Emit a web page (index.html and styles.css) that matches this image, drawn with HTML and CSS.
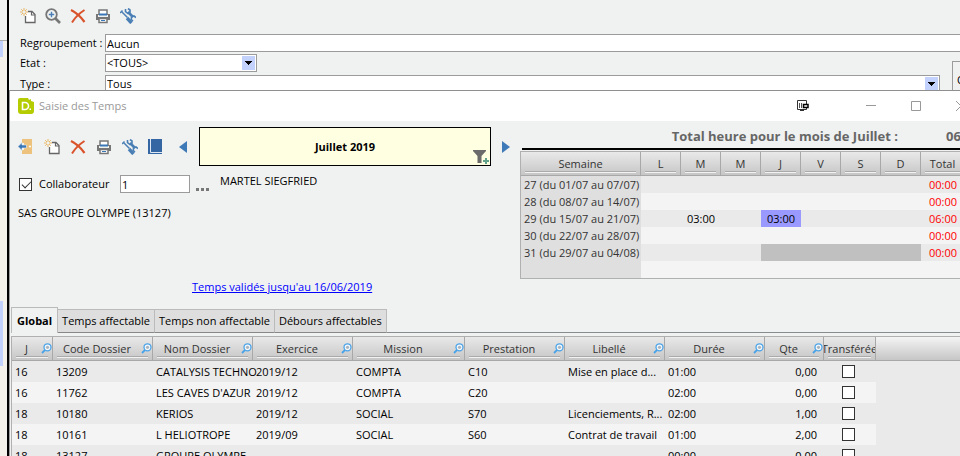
FILE: index.html
```
<!DOCTYPE html>
<html lang="fr">
<head>
    <meta charset="UTF-8">
    <meta name="viewport" content="width=device-width, initial-scale=1.0">
    <title>Saisie des Temps</title>
    <link rel="stylesheet" href="styles.css">
</head>
<body>
    <!-- Icônes -->
    <svg class="sprite" aria-hidden="true">
        <symbol id="i-new" viewBox="0 0 16 16">
            <path d="M8 3.500h4l3 3v8H5.500V8" fill="#fff" stroke="#666" stroke-width="1.300"/>
            <path d="M11.500 3.500v3.500h3.500" fill="none" stroke="#666" stroke-width="1.200"/>
            <path d="M4 0v8M0 4h8M1.200 1.200l5.600 5.600M6.800 1.200L1.200 6.800" stroke="#eab765" stroke-width="1"/>
            <circle cx="4" cy="4" r="1.300" fill="#f0f2f1"/>
        </symbol>
        <symbol id="i-zoom" viewBox="0 0 16 16">
            <path d="M10.500 10.500l4.500 4.500" stroke="#777" stroke-width="2.600"/>
            <circle cx="6.500" cy="6.500" r="5.300" fill="#f0f2f1" stroke="#777" stroke-width="1.800"/>
            <path d="M6.500 3.800v5.400M3.800 6.500h5.400" stroke="#4a7fb5" stroke-width="1.400"/>
        </symbol>
        <symbol id="i-delete" viewBox="0 0 16 16">
            <path d="M1 2C5 4 11 9 14.500 14" fill="none" stroke="#d9532c" stroke-width="2.200"/>
            <path d="M14.500 2C9 5.500 5 9.500 2 14.500" fill="none" stroke="#d9532c" stroke-width="2"/>
        </symbol>
        <symbol id="i-print" viewBox="0 0 16 16">
            <path d="M4 6V2h8v4" fill="#fff" stroke="#777" stroke-width="1.500"/>
            <path d="M1 6h14v6H1z" fill="#777"/>
            <path d="M3 7h10v2H3z" fill="#f0f2f1"/>
            <path d="M4 5.500h8v2H4z" fill="#3a77b7"/>
            <path d="M4 10.500h8v4H4z" fill="#fff" stroke="#777" stroke-width="1.500"/>
            <path d="M6 12.500h4" stroke="#3a77b7"/>
        </symbol>
        <symbol id="i-tools" viewBox="0 0 16 16">
            <path d="M1.500 3.500l6 6" stroke="#4a7fb5" stroke-width="1.500"/>
            <path d="M0 5l2.500-2.500" stroke="#4a7fb5" stroke-width="1.500"/>
            <path d="M7 10l4.500 5" stroke="#4a7fb5" stroke-width="3.400"/>
            <path d="M8 4l5 5" stroke="#4a7fb5" stroke-width="2.600"/>
            <path d="M5.500 1v2.500L8 5.500l2-1.500V2L8 .500M16 9.500l-2-1.500-2.500 1-.2 2.500 1.700 1.500" fill="none" stroke="#4a7fb5" stroke-width="1.600"/>
        </symbol>
        <symbol id="i-exit" viewBox="0 0 16 16">
            <path d="M4 0h10v15H4v-4h4V4H4z" fill="#edc27c"/>
            <path d="M6 2h8v11H6z" fill="#edc27c"/>
            <path d="M0 7.500l4-4V6h4.500v3H4v2.500z" fill="#3a77b7" stroke="#f0f2f1" stroke-width=".6"/>
            <circle cx="12" cy="7.500" r="1" fill="#fff"/>
        </symbol>
        <symbol id="i-book" viewBox="0 0 16 16">
            <path d="M0 0h14v15H0z" fill="#3366a3"/>
            <path d="M2.500 0v13.500H14" fill="none" stroke="#dfe8f2" stroke-width="1"/>
        </symbol>
        <symbol id="i-search" viewBox="0 0 11 11">
            <path d="M4.500 6.500L1 10" stroke="#4aa3e8" stroke-width="1.800"/>
            <circle cx="6.500" cy="4.300" r="3.500" fill="#f5f9fd" stroke="#4aa3e8" stroke-width="1.300"/>
            <circle cx="6.500" cy="4.300" r="1.600" fill="#aab4bc"/>
        </symbol>
        <symbol id="i-funnel" viewBox="0 0 17 16">
            <path d="M0 1h13v1L8.500 7v7h-4V7L0 2z" fill="#6b6b6b"/>
            <path d="M13 9v6M10 12h6" stroke="#62a28d" stroke-width="2"/>
        </symbol>
    </svg>

    <!-- Bord de la fenêtre voisine -->
    <div class="side">
        <div class="side-top"></div>
        <div class="side-item"></div>
        <div class="side-space"></div>
        <div class="side-item side-item-tall"></div>
    </div>

    <main class="main">
        <!-- Fenêtre principale -->
        <section class="filters">
            <div class="toolbar">
                <button class="tool" aria-label="Nouveau"><svg><use href="#i-new"/></svg></button>
                <button class="tool" aria-label="Rechercher"><svg><use href="#i-zoom"/></svg></button>
                <button class="tool" aria-label="Supprimer"><svg><use href="#i-delete"/></svg></button>
                <button class="tool" aria-label="Imprimer"><svg><use href="#i-print"/></svg></button>
                <button class="tool" aria-label="Outils"><svg><use href="#i-tools"/></svg></button>
            </div>
            <div class="filter-row">
                <label for="regroupement">Regroupement :</label>
                <input class="field field-wide" type="text" id="regroupement" value="Aucun">
            </div>
            <div class="filter-lower">
                <div class="filter-fields">
                    <div class="filter-row">
                        <label for="etat">Etat :</label>
                        <select class="field field-etat" id="etat"><option>&lt;TOUS&gt;</option></select>
                    </div>
                    <div class="filter-row">
                        <label for="type">Type :</label>
                        <select class="field field-wide" id="type"><option>Tous</option></select>
                    </div>
                </div>
                <div class="group-box">O</div>
            </div>
        </section>

        <!-- Fenêtre de saisie -->
        <section class="dialog">
            <header class="titlebar">
                <svg class="logo" viewBox="0 0 16 16" aria-hidden="true">
                    <path d="M2 0h8l1 2 2-1v2l3 1v9a3 3 0 0 1-3 3H3a3 3 0 0 1-3-3V2a2 2 0 0 1 2-2z" fill="#b5cc00"/>
                    <path d="M4.500 4.500h2.500a3.500 3.500 0 0 1 0 7H4.500z" fill="none" stroke="#fff" stroke-width="1.600"/>
                    <path d="M11.500 10.500H13V12h-1.500z" fill="#fff"/>
                </svg>
                <h1>Saisie des Temps</h1>
                <svg class="screen-icon" viewBox="0 0 12 12" aria-hidden="true">
                    <path d="M.5.500h9v9h-9z" fill="#fff" stroke="#333"/>
                    <path d="M3 10.500h4" stroke="#333"/>
                    <path d="M2.500 3v5M4.500 3v5" stroke="#555"/>
                    <path d="M6.500 4.500h4.500v3h-4.500z" fill="#fff" stroke="#000" stroke-width="1.500"/>
                </svg>
                <button class="win-button" aria-label="Réduire"><svg viewBox="0 0 10 10"><path d="M0 4.500h10"/></svg></button>
                <button class="win-button" aria-label="Agrandir"><svg viewBox="0 0 10 10"><path d="M.5.500h9v9h-9z"/></svg></button>
                <button class="win-button" aria-label="Fermer"><svg viewBox="0 0 10 10"><path d="M0 0l10 10M10 0L0 10"/></svg></button>
            </header>

            <div class="top">
                <div class="entry">
                    <div class="month-row">
                        <div class="toolbar">
                            <button class="tool" aria-label="Quitter"><svg><use href="#i-exit"/></svg></button>
                            <button class="tool" aria-label="Nouveau"><svg><use href="#i-new"/></svg></button>
                            <button class="tool" aria-label="Supprimer"><svg><use href="#i-delete"/></svg></button>
                            <button class="tool" aria-label="Imprimer"><svg><use href="#i-print"/></svg></button>
                            <button class="tool" aria-label="Outils"><svg><use href="#i-tools"/></svg></button>
                            <button class="tool" aria-label="Journal"><svg><use href="#i-book"/></svg></button>
                        </div>
                        <button class="arrow" aria-label="Mois précédent"><svg viewBox="0 0 8 12"><path d="M8 0v12L0 6z"/></svg></button>
                        <div class="month">
                            Juillet 2019
                            <svg class="funnel"><use href="#i-funnel"/></svg>
                        </div>
                        <button class="arrow" aria-label="Mois suivant"><svg viewBox="0 0 8 12"><path d="M0 0v12l8-6z"/></svg></button>
                    </div>
                    <div class="person-row">
                        <input class="check" type="checkbox" id="collab-actif" checked>
                        <label for="collab-actif">Collaborateur</label>
                        <input class="field field-code" type="text" value="1" aria-label="Code collaborateur">
                        <button class="dots" aria-label="Choisir"><i></i><i></i><i></i></button>
                        <span class="person">MARTEL SIEGFRIED</span>
                    </div>
                    <p class="company">SAS GROUPE OLYMPE (13127)</p>
                    <a class="validated" href="#">Temps validés jusqu'au 16/06/2019</a>
                </div>

                <div class="weeks">
                    <div class="weeks-title"><span>Total heure pour le mois de Juillet :</span><span>06:00</span></div>
                    <table class="week-table">
                        <thead>
                            <tr><th class="w-week">Semaine</th><th>L</th><th>M</th><th>M</th><th>J</th><th>V</th><th>S</th><th>D</th><th class="w-total">Total</th><th class="w-rest"></th></tr>
                        </thead>
                        <tbody>
                            <tr><th>27 (du 01/07 au 07/07)</th><td></td><td></td><td></td><td></td><td></td><td></td><td></td><td class="total">00:00</td><td></td></tr>
                            <tr><th>28 (du 08/07 au 14/07)</th><td></td><td></td><td></td><td></td><td></td><td></td><td></td><td class="total">00:00</td><td></td></tr>
                            <tr><th>29 (du 15/07 au 21/07)</th><td></td><td>03:00</td><td></td><td class="current">03:00</td><td></td><td></td><td></td><td class="total">06:00</td><td></td></tr>
                            <tr><th>30 (du 22/07 au 28/07)</th><td></td><td></td><td></td><td></td><td></td><td></td><td></td><td class="total">00:00</td><td></td></tr>
                            <tr><th>31 (du 29/07 au 04/08)</th><td></td><td></td><td></td><td class="off"></td><td class="off"></td><td class="off"></td><td class="off"></td><td class="total">00:00</td><td></td></tr>
                            <tr><th></th><td></td><td></td><td></td><td></td><td></td><td></td><td></td><td></td><td></td></tr>
                        </tbody>
                    </table>
                </div>
            </div>

            <!-- Onglets -->
            <nav class="tabs">
                <button class="tab tab-active">Global</button>
                <button class="tab">Temps affectable</button>
                <button class="tab">Temps non affectable</button>
                <button class="tab">Débours affectables</button>
                <span class="tabs-line"></span>
            </nav>

            <!-- Lignes de temps -->
            <table class="grid">
                <thead>
                    <tr>
                        <th class="c-day"><div><span>J</span><svg><use href="#i-search"/></svg></div></th>
                        <th class="c-std"><div><span>Code Dossier</span><svg><use href="#i-search"/></svg></div></th>
                        <th class="c-std"><div><span>Nom Dossier</span><svg><use href="#i-search"/></svg></div></th>
                        <th class="c-std"><div><span>Exercice</span><svg><use href="#i-search"/></svg></div></th>
                        <th class="c-mission"><div><span>Mission</span><svg><use href="#i-search"/></svg></div></th>
                        <th class="c-std"><div><span>Prestation</span><svg><use href="#i-search"/></svg></div></th>
                        <th class="c-std"><div><span>Libellé</span><svg><use href="#i-search"/></svg></div></th>
                        <th class="c-std"><div><span>Durée</span><svg><use href="#i-search"/></svg></div></th>
                        <th class="c-qty"><div><span>Qte</span><svg><use href="#i-search"/></svg></div></th>
                        <th class="c-sent"><div><span>Transférée</span></div></th>
                        <th class="rest"></th>
                    </tr>
                </thead>
                <tbody>
                    <tr><td>16</td><td>13209</td><td>CATALYSIS TECHNO</td><td>2019/12</td><td>COMPTA</td><td>C10</td><td>Mise en place d...</td><td>01:00</td><td class="num">0,00</td><td class="mid"><input class="check" type="checkbox" aria-label="Transférée"></td><td class="rest"></td></tr>
                    <tr><td>16</td><td>11762</td><td>LES CAVES D'AZUR</td><td>2019/12</td><td>COMPTA</td><td>C20</td><td></td><td>02:00</td><td class="num">0,00</td><td class="mid"><input class="check" type="checkbox" aria-label="Transférée"></td><td class="rest"></td></tr>
                    <tr><td>18</td><td>10180</td><td>KERIOS</td><td>2019/12</td><td>SOCIAL</td><td>S70</td><td>Licenciements, R...</td><td>02:00</td><td class="num">1,00</td><td class="mid"><input class="check" type="checkbox" aria-label="Transférée"></td><td class="rest"></td></tr>
                    <tr><td>18</td><td>10161</td><td>L HELIOTROPE</td><td>2019/09</td><td>SOCIAL</td><td>S60</td><td>Contrat de travail</td><td>01:00</td><td class="num">2,00</td><td class="mid"><input class="check" type="checkbox" aria-label="Transférée"></td><td class="rest"></td></tr>
                    <tr><td>18</td><td>13127</td><td>GROUPE OLYMPE</td><td></td><td></td><td></td><td></td><td>00:00</td><td class="num">0,00</td><td class="mid"><input class="check" type="checkbox" aria-label="Transférée"></td><td class="rest"></td></tr>
                </tbody>
            </table>
        </section>
    </main>
</body>
</html>
```
FILE: styles.css
```
* {
    margin: 0;
    padding: 0;
    box-sizing: border-box;
}

body {
    display: flex;
    height: 100vh;
    overflow: hidden;
    background-color: #f0f2f1;
    color: #000;
    font-family: "Open Sans", "Noto Sans", sans-serif;
    font-size: 11px;
    line-height: 16px;
}

input, select, button {
    font: inherit;
    color: inherit;
}

button {
    background: none;
    border: none;
}

svg {
    display: block;
}

.sprite {
    position: absolute;
    width: 0;
    height: 0;
}

/* Bord gauche */
.side {
    flex: none;
    width: 9px;
    background-color: #f4f1ea;
    border-right: 2px solid #000;
}

.side-top {
    height: 41px;
    background-color: #f0f2f1;
    border-bottom: 1px solid #aaa;
}

.side-item {
    width: 3px;
    height: 16px;
    background-color: #c3d2fc;
}

.side-space {
    height: 244px;
}

.side-item-tall {
    height: 65px;
}

.main {
    flex: 1;
    min-width: 0;
    overflow: hidden;
}

/* Filtres */
.filters {
    height: 90px;
    padding: 8px 0 0 11px;
    overflow: hidden;
}

.toolbar {
    display: flex;
    gap: 9px;
}

.tool {
    width: 16px;
    height: 16px;
}

.tool svg {
    width: 16px;
    height: 16px;
}

.filters .toolbar {
    margin-bottom: 10px;
}

.filter-row {
    display: flex;
    align-items: center;
    margin-bottom: 2px;
}

.filter-row label {
    width: 85px;
    white-space: nowrap;
}

.filter-lower {
    display: flex;
    gap: 12px;
}

.filter-fields {
    flex: 1;
}

.filter-fields .filter-row {
    margin-bottom: 3px;
}

.field {
    height: 18px;
    padding: 0 1px;
    background-color: #fff;
    border: 1px solid #9b9b9b;
    border-radius: 0;
}

.field-wide {
    flex: 1;
}

input.field-wide {
    border-right: none;
}

.field-etat {
    width: 152px;
}

.field-code {
    width: 70px;
}

/* Flèche noire sur fond bleu */
select.field {
    appearance: none;
    background-image: conic-gradient(from 315deg at 50% 100%, #000 90deg, transparent 0), linear-gradient(#c3d2fc, #c3d2fc);
    background-size: 8px 4px, 13px 14px;
    background-position: right 4px top 6px, right 1px top 1px;
    background-repeat: no-repeat;
}

.group-box {
    width: 8px;
    height: 60px;
    margin-top: 7px;
    padding: 10px 0 0 4px;
    border: 1px solid #9b9b9b;
    border-right: none;
    overflow: hidden;
}

/* Fenêtre de saisie */
.dialog {
    margin-right: -28px;
    border-top: 1px solid #8f8f8f;
    border-left: 1px solid #9b9b9b;
}

.titlebar {
    display: flex;
    align-items: center;
    height: 30px;
    padding: 0 5px 0 8px;
    background-color: #fff;
}

.logo {
    width: 16px;
    height: 16px;
    margin-right: 5px;
}

.titlebar h1 {
    flex: 1;
    color: #999;
    font-size: 11px;
    font-weight: normal;
}

.screen-icon {
    width: 12px;
    height: 12px;
    margin-right: 39px;
}

.win-button {
    width: 45px;
    height: 30px;
}

.win-button svg {
    width: 10px;
    height: 10px;
    margin: 0 auto;
    fill: none;
    stroke: #999;
    overflow: visible;
}

.top {
    display: flex;
    height: 186px;
}

.entry {
    width: 510px;
    padding: 6px 10px 0 8px;
}

.month-row {
    display: flex;
    align-items: center;
}

.month-row .toolbar {
    gap: 10px;
    margin-right: 15px;
}

.arrow svg {
    width: 8px;
    height: 12px;
    fill: #3f7ab8;
}

.month {
    position: relative;
    width: 292px;
    height: 39px;
    margin: 0 11px 0 12px;
    background-color: #ffffe1;
    border: 1px solid #000;
    font-weight: bold;
    line-height: 38px;
    text-align: center;
}

.funnel {
    position: absolute;
    right: 0;
    bottom: 0;
    width: 17px;
    height: 16px;
}

.person-row {
    display: flex;
    align-items: center;
    height: 18px;
    margin-top: 9px;
}

.check {
    appearance: none;
    display: block;
    width: 13px;
    height: 13px;
    background-color: #fff;
    border: 1px solid #333;
}

.check:checked::before {
    content: "";
    display: block;
    width: 8px;
    height: 4px;
    margin: 2px 0 0 2px;
    border-left: 1px solid #333;
    border-bottom: 1px solid #333;
    transform: rotate(-45deg);
}

.person-row .check {
    margin: 0 7px 0 1px;
}

.person-row label {
    width: 81px;
}

.dots {
    display: flex;
    align-self: flex-end;
    gap: 2px;
    margin: 0 11px 2px 6px;
}

.dots i {
    width: 3px;
    height: 3px;
    background-color: #777;
}

.person {
    align-self: flex-start;
    line-height: 11px;
}

.company {
    margin: 12px 0 58px;
}

.validated {
    margin-left: 174px;
    color: #0000ff;
}

/* Semaines du mois */
.weeks {
    flex: 1;
}

.weeks-title {
    display: flex;
    justify-content: flex-end;
    gap: 48px;
    height: 29px;
    margin-left: 2px;
    border-bottom: 2px solid #000;
    color: #666;
    font-size: 13px;
    font-weight: bold;
    line-height: 30px;
    white-space: nowrap;
}

.weeks-title span:last-child {
    width: 42px;
}

table {
    width: 100%;
    border-collapse: separate;
    border-spacing: 0;
    table-layout: fixed;
}

th {
    font-weight: normal;
}

thead th {
    height: 24px;
    color: #333;
    border-right: 1px solid #a8a8a8;
    border-bottom: 1px solid #a8a8a8;
    background-image: linear-gradient(#aaa 1px, #f2f2f2 1px), linear-gradient(#e9e9e9, #c6c6c6);
    background-size: calc(100% - 8px) 2px, 100% 100%;
    background-position: 4px calc(100% - 2px), 0 0;
    background-repeat: no-repeat;
}

.week-table {
    margin-top: 1px;
    border: 1px solid #b0b0b0;
}

.week-table td {
    height: 17px;
    text-align: center;
    line-height: 17px;
}

.week-table tbody th {
    padding-left: 3px;
    background-color: #dfdfdf;
    color: #333;
    text-align: left;
    line-height: 17px;
    white-space: nowrap;
}

tbody tr {
    background-color: #f4f4f4;
}

tbody tr:nth-child(odd) {
    background-color: #eaeaea;
}

.week-table thead th {
    width: 40px;
}

.week-table .w-week {
    width: 120px;
}

.week-table .w-total {
    width: 44px;
}

.week-table .w-rest {
    width: auto;
}

.week-table .total {
    color: #ff0000;
}

.week-table .current {
    background-color: #9999ff;
}

.week-table .off {
    background-color: #c0c0c0;
}

/* Onglets */
.tabs {
    display: flex;
    align-items: flex-end;
    height: 26px;
    padding-left: 1px;
}

.tab {
    height: 24px;
    padding: 0 4px;
    background-color: #dedede;
    border: 1px solid #bbb;
    border-left: none;
    border-bottom-color: #888;
    white-space: nowrap;
}

.tab-active {
    height: 26px;
    padding: 0 5px;
    background-color: #f0f2f1;
    border-left: 1px solid #bbb;
    border-bottom: none;
    font-weight: bold;
}

.tabs-line {
    flex: 1;
    border-bottom: 1px solid #888c90;
}

/* Grille des temps */
.grid {
    margin: 3px 0 0 1px;
    border: 1px solid #b0b0b0;
}

.grid thead th div {
    display: flex;
    align-items: center;
    justify-content: center;
    overflow: hidden;
}

.grid thead th span {
    flex: 1;
}

.grid thead th svg {
    flex: none;
    width: 11px;
    height: 11px;
}

.grid td {
    height: 21px;
    padding-left: 3px;
    white-space: nowrap;
}

.c-day {
    width: 41px;
}

.c-std {
    width: 100px;
}

.c-mission {
    width: 112px;
}

.c-qty {
    width: 59px;
}

.c-sent {
    width: 52px;
}

.grid .num {
    padding-right: 7px;
    text-align: right;
}

.grid .mid {
    padding: 0 4px 0 0;
}

.grid .mid .check {
    margin: 0 auto;
}

.grid th.rest {
    border-right: none;
    background-image: linear-gradient(#f4f4f4, #c6c6c6);
    background-size: 100% 100%;
    background-position: 0 0;
}

.grid td.rest {
    background-color: #eaeaea;
}
```
